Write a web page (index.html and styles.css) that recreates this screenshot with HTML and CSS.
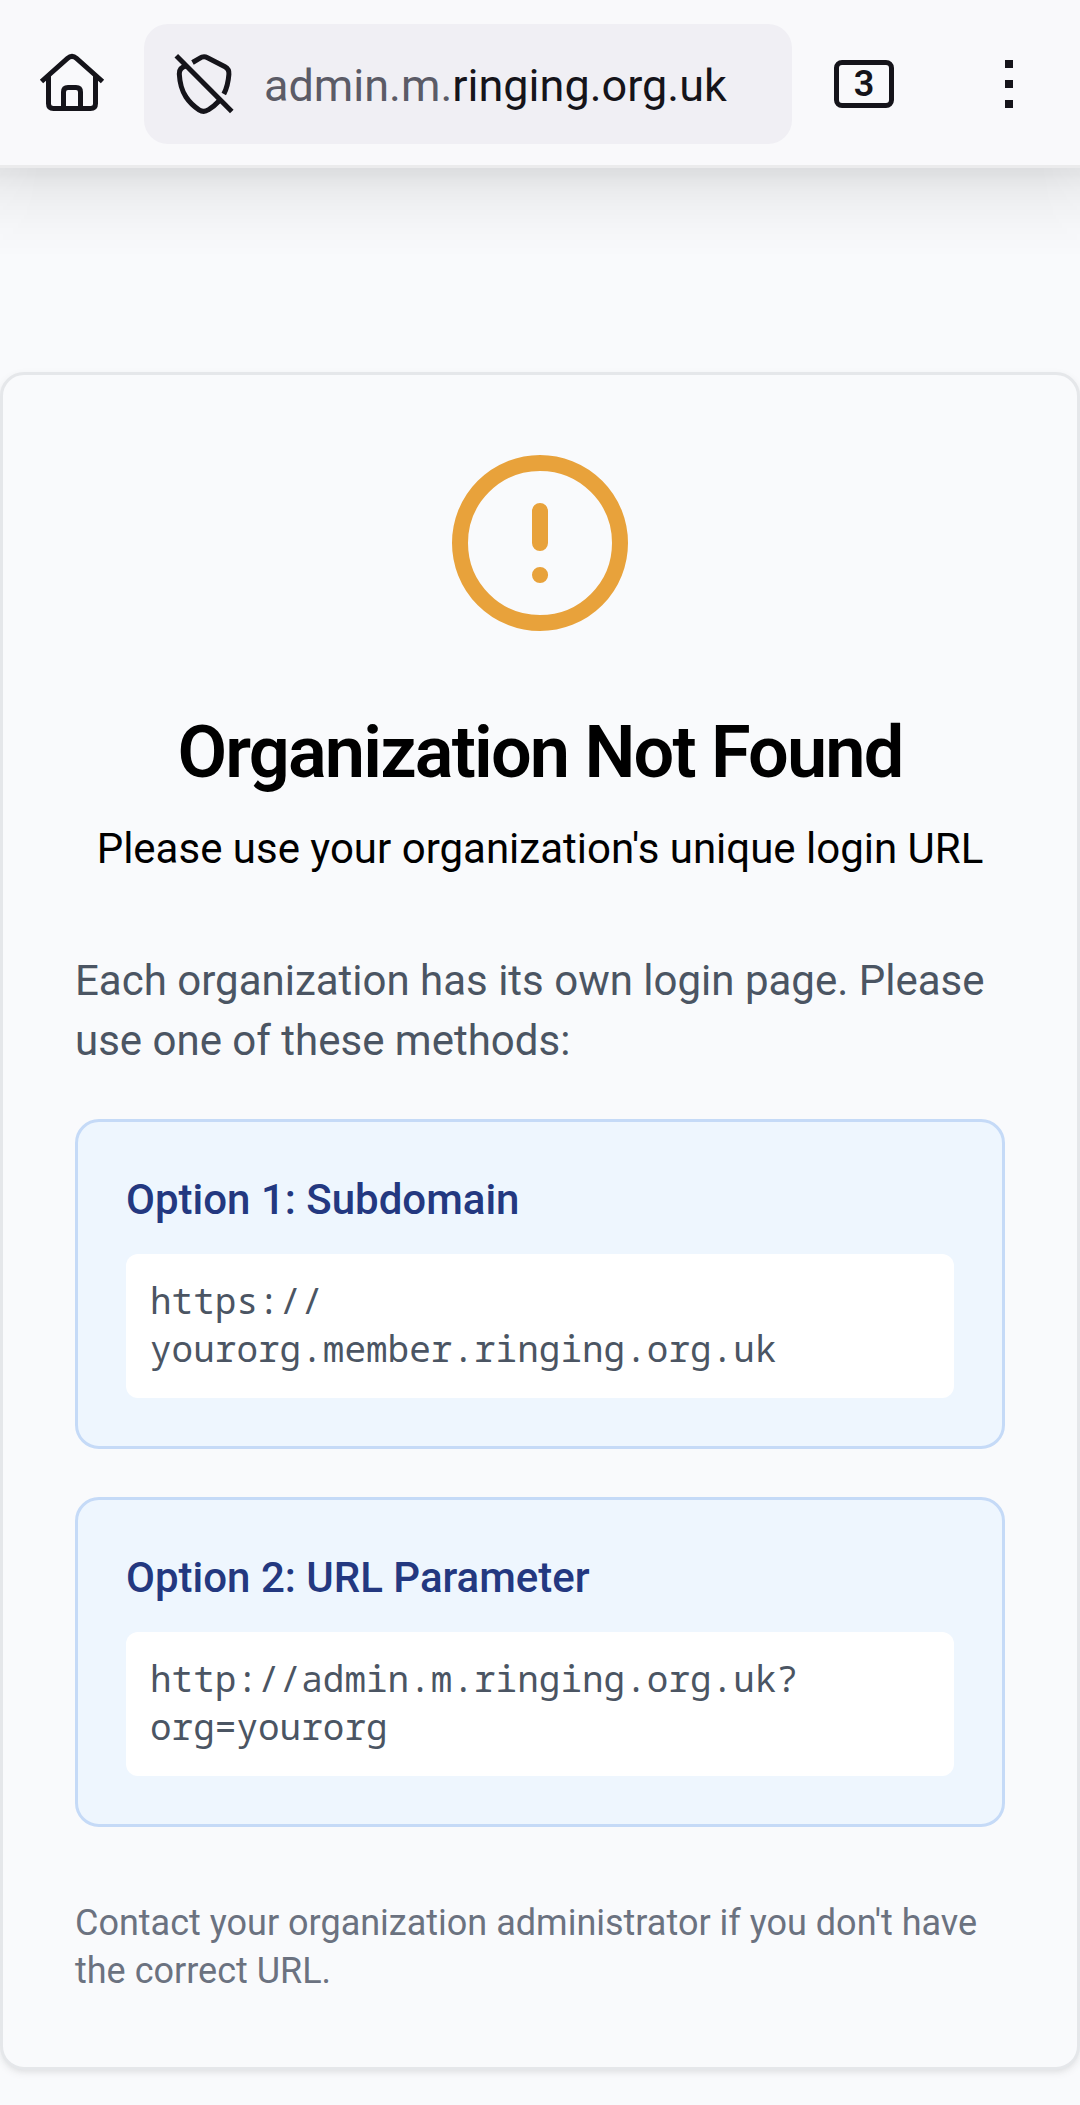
FILE: index.html
```html
<!DOCTYPE html>
<html lang="en">
<head>
<meta charset="utf-8">
<title>Organization Not Found</title>
<link rel="stylesheet" href="styles.css">
</head>
<body>
<header class="toolbar">
  <svg class="home" viewBox="0 0 72 72" fill="none" stroke="currentColor" stroke-width="5" stroke-linejoin="round">
    <path d="M5.500 35.500 L31.500 12.300 Q36 8.300 40.500 12.300 L66.500 35.500"/>
    <path d="M12.500 29 V57.500 Q12.500 62.500 17.500 62.500 H54.500 Q59.500 62.500 59.500 57.500 V29"/>
    <path d="M27.500 62.500 V46 Q27.500 41.500 32 41.500 H40 Q44.500 41.500 44.500 46 V62.500"/>
  </svg>
  <div class="address">
    <svg class="shield" viewBox="0 0 72 72" fill="none" stroke="currentColor" stroke-width="5">
      <path d="M8.300 9.800 L63.800 65.500"/>
      <path d="M24.500 16.500 L31.500 12.400 Q35.500 9.700 39.500 11.700 L57 20.700 Q61.300 23 60.900 28.200 Q60 40 55.800 48"/>
      <path d="M18 20 Q11 21.500 11.300 28 Q12 42 18 51 Q23 58.500 31 63.800 Q35.700 67 40.300 63.800 Q46 60.500 51 55"/>
    </svg>
    <span class="url">admin.m.<span class="domain">ringing.org.uk</span></span>
  </div>
  <div class="tabs">3</div>
  <div class="menu"><i></i><i></i><i></i></div>
</header>
<main class="page">
  <section class="card">
    <div class="card-header">
      <svg class="alert" viewBox="0 0 24 24" fill="none" stroke="currentColor" stroke-width="2" stroke-linecap="round">
        <circle cx="12" cy="12" r="10"/>
        <path d="M12 8v4M12 16h.01"/>
      </svg>
      <h1>Organization Not Found</h1>
      <p>Please use your organization's unique login URL</p>
    </div>
    <div class="card-content">
      <p class="intro">Each organization has its own login page. Please use one of these methods:</p>
      <div class="option">
        <h2>Option 1: Subdomain</h2>
        <code>https://<wbr>yourorg.member.ringing.org.uk</code>
      </div>
      <div class="option">
        <h2>Option 2: URL Parameter</h2>
        <code>http://admin.m.ringing.org.uk?<wbr>org=yourorg</code>
      </div>
      <p class="contact">Contact your organization administrator if you don't have the correct URL.</p>
    </div>
  </section>
</main>
</body>
</html>
```
FILE: styles.css
```css
* { box-sizing: border-box; }
body {
  margin: 0;
  min-height: 2105px;
  background: #f9fafc;
  color: #000;
  font-family: Roboto, "Liberation Sans", sans-serif;
}
h1, h2, p { margin: 0; }
svg { display: block; flex: none; }

.toolbar {
  position: relative;
  display: flex;
  align-items: center;
  height: 168px;
  padding: 0 67px 0 36px;
  border-bottom: 3px solid #ebebec;
  background: #f9f9fb;
  color: #15141a;
}
.toolbar::after {
  content: "";
  position: absolute;
  top: 168px;
  left: 0;
  right: 0;
  height: 90px;
  background: linear-gradient(rgba(0,0,0,.108), rgba(0,0,0,.1) 6px, rgba(0,0,0,.078) 13px, rgba(0,0,0,.055) 24px, rgba(0,0,0,.035) 40px, rgba(0,0,0,.015) 62px, transparent);
  -webkit-mask-image: linear-gradient(90deg, rgba(0,0,0,.82), #000 40px, #000 1040px, rgba(0,0,0,.82));
  mask-image: linear-gradient(90deg, rgba(0,0,0,.82), #000 40px, #000 1040px, rgba(0,0,0,.82));
}
.home { width: 72px; height: 72px; margin-top: -1px; }
.address {
  display: flex;
  align-items: center;
  gap: 24px;
  width: 648px;
  height: 120px;
  margin-top: 3px;
  margin-left: 36px;
  padding-left: 24px;
  border-radius: 24px;
  background: #f0eff4;
}
.shield { width: 72px; height: 72px; margin-top: -4px; }
.url { padding-top: 4px; color: #5b5b66; font-size: 45px; line-height: 60px; }
.domain { color: #15141a; }
.tabs {
  width: 60px;
  height: 48px;
  margin-top: 3px;
  margin-left: 42px;
  border: 5px solid currentColor;
  border-radius: 8px;
  font-size: 36px;
  font-weight: 600;
  line-height: 38px;
  text-align: center;
}
.menu { display: grid; gap: 12px; margin-top: 3px; margin-left: auto; }
.menu i { width: 8px; height: 8px; background: currentColor; }

.page { padding-top: 204px; }
.card {
  padding: 72px;
  border: 3px solid #e5e7ea;
  border-radius: 24px;
  background: #f9fafc;
  box-shadow: 0 3px 9px rgba(0,0,0,.07), 0 3px 6px -3px rgba(0,0,0,.07);
}
.card-header { display: flex; flex-direction: column; align-items: center; gap: 18px; text-align: center; }
.alert { width: 192px; height: 192px; margin-bottom: 48px; color: #e8a23b; }
h1 { font-size: 72px; font-weight: 600; line-height: 96px; letter-spacing: -.025em; }
.card-header p, .intro { font-size: 42px; line-height: 60px; }
.card-content { display: grid; gap: 48px; margin-top: 72px; }
.intro { color: #4b5563; }
.option {
  padding: 48px;
  border: 3px solid #c5daf7;
  border-radius: 24px;
  background: #eef6fe;
}
h2 { margin-bottom: 24px; color: #233880; font-size: 42px; font-weight: 500; line-height: 60px; }
code {
  display: block;
  padding: 23px 24px 25px;
  border-radius: 12px;
  background: #fff;
  color: #4b5563;
  font-family: "Noto Sans Mono", "DejaVu Sans Mono", monospace;
  font-size: 36px;
  line-height: 48px;
}
.contact { padding-top: 24px; color: #6b7280; font-size: 36px; line-height: 48px; }
```
